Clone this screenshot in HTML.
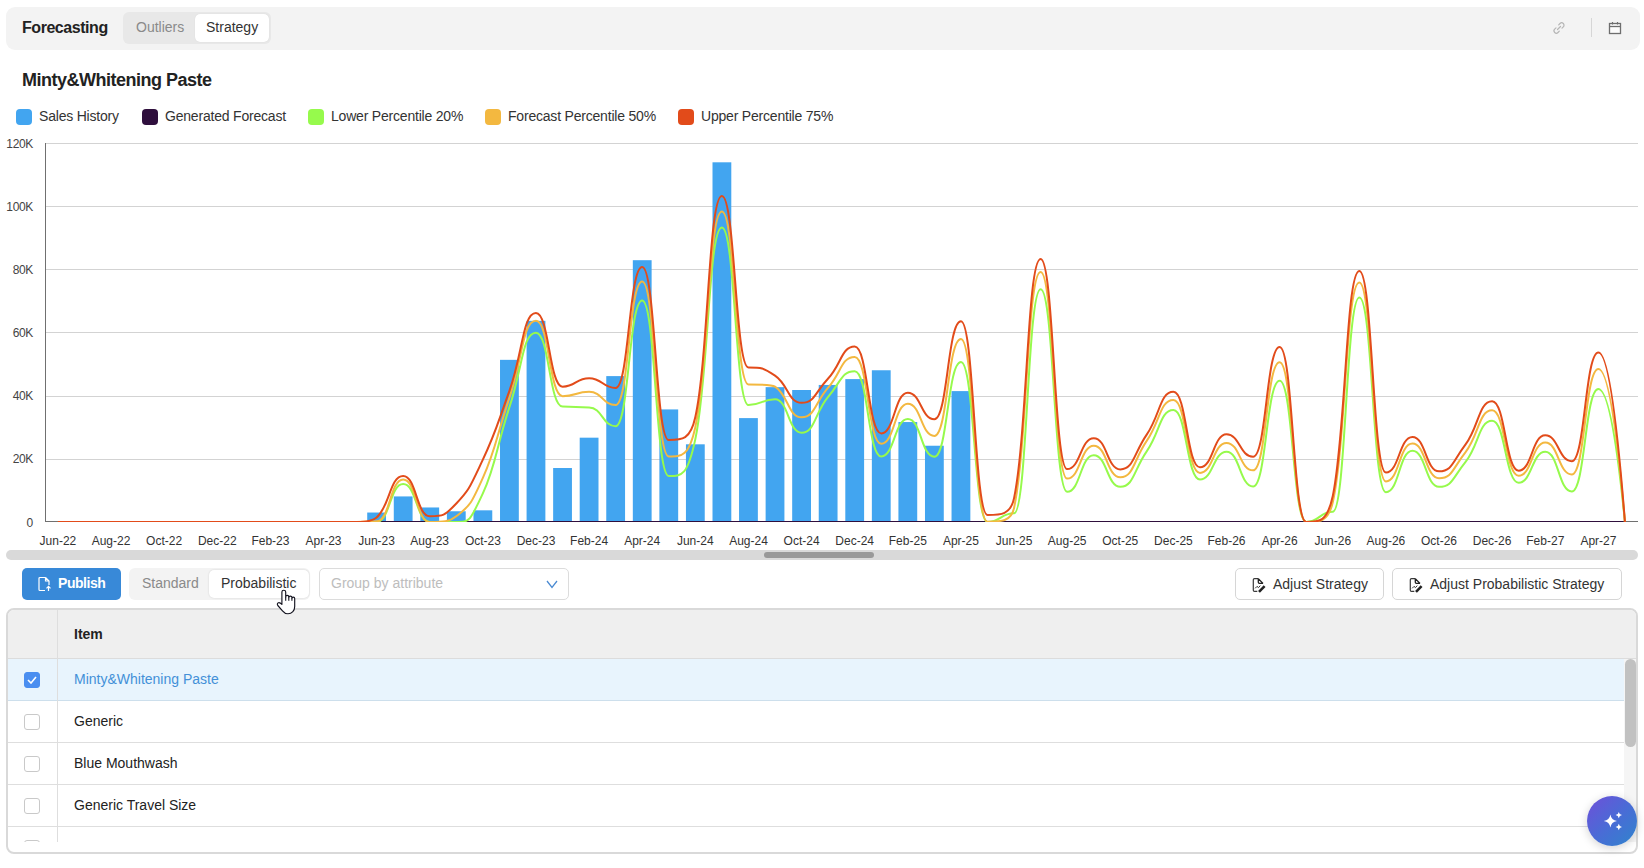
<!DOCTYPE html>
<html><head><meta charset="utf-8"><title>Forecasting</title>
<style>
*{box-sizing:border-box;margin:0;padding:0}
html,body{width:1644px;height:868px;overflow:hidden;background:#fff;font-family:"Liberation Sans",sans-serif;color:#222}
.abs{position:absolute}
.hdr{position:absolute;left:6px;top:7px;width:1634px;height:43px;background:#f3f3f3;border-radius:9px}
.hdr .title{position:absolute;left:16px;top:12px;font-size:16px;font-weight:bold;color:#222;letter-spacing:-0.45px}
.seg{position:absolute;background:#e8e8e8;border-radius:6px}
.seg .opt{position:absolute;font-size:14px;color:#8a8a8a}
.seg .sel{position:absolute;background:#fff;border-radius:5px;box-shadow:0 0 1px rgba(0,0,0,.12)}
.chart{position:absolute;left:0;top:0}
.chart text{font-family:"Liberation Sans",sans-serif}
.yl{font-size:12px;fill:#444;letter-spacing:-0.4px}
.xl{font-size:12px;fill:#333}
.ctitle{position:absolute;left:22px;top:70px;font-size:18px;font-weight:bold;color:#222;letter-spacing:-0.5px}
.lg{position:absolute;top:109px;height:16px}
.lg i{position:absolute;left:0;top:0;width:16px;height:16px;border-radius:4px}
.lg span{position:absolute;left:23px;top:-1px;letter-spacing:-0.2px;font-size:14px;color:#333;white-space:nowrap;line-height:16px}
.sb{position:absolute;left:6px;top:550px;width:1632px;height:10px;background:#d9d9d9;border-radius:5px}
.sb b{position:absolute;left:758px;top:2px;width:110px;height:6px;background:#999;border-radius:3px}
.btn{position:absolute;height:32px;border-radius:5px;font-size:14px}
.pub{left:22px;top:568px;width:99px;background:#3889D8;color:#fff}
.ob{top:568px;background:#fff;border:1px solid #d6d6d6;color:#333}
.dd{position:absolute;left:319px;top:568px;width:250px;height:32px;border:1px solid #dcdcdc;border-radius:5px;background:#fff}
.dd span{position:absolute;left:11px;top:6px;font-size:14px;color:#bdbdbd}
.tbl{position:absolute;left:6px;top:608px;width:1632px;height:246px;border:2px solid #d9d9d9;border-radius:8px;overflow:hidden;background:#fff}
.th{position:absolute;left:0;top:0;width:100%;height:49px;background:#efefef;border-bottom:1px solid #dcdcdc}
.row{position:absolute;left:0;width:1617px;height:42px;border-bottom:1px solid #dedede}
.row span{position:absolute;left:66px;top:12px;font-size:14px;color:#222}
.cb{position:absolute;left:16px;top:13px;width:16px;height:16px;border:1px solid #c9c9c9;border-radius:3px;background:#fff}
.vdiv{position:absolute;left:49px;top:0;width:1px;height:232px;background:#dedede}
.fab{position:absolute;left:1587px;top:796px;width:50px;height:50px;border-radius:50%;background:linear-gradient(135deg,#6f4fd9 0%,#4a6bd6 50%,#2f85cc 100%);box-shadow:0 2px 10px rgba(0,0,0,.18)}
</style></head>
<body>
<div class="hdr">
  <div class="title">Forecasting</div>
  <div class="seg" style="left:117px;top:5px;width:148px;height:32px">
    <div class="opt" style="left:13px;top:7px">Outliers</div>
    <div class="sel" style="left:72px;top:2px;width:74px;height:28px"></div>
    <div class="opt" style="left:83px;top:7px;color:#333">Strategy</div>
  </div>
  <svg class="abs" style="left:1544px;top:12px" width="18" height="18" viewBox="0 0 18 18"><path d="M7.5 10.5l3-3M8.7 5.8l1.3-1.3a2.3 2.3 0 0 1 3.3 3.3l-1.3 1.3M9.3 12.2l-1.3 1.3a2.3 2.3 0 0 1-3.3-3.3l1.3-1.3" fill="none" stroke="#b5b5b5" stroke-width="1.2" stroke-linecap="round"/></svg>
  <div class="abs" style="left:1585px;top:11px;width:1px;height:19px;background:#d6d6d6"></div>
  <svg class="abs" style="left:1601px;top:13px" width="16" height="16" viewBox="0 0 16 16"><rect x="2.5" y="3.5" width="11" height="10" fill="#fcfcfc" stroke="#6e6e6e" stroke-width="1.3"/><line x1="2.5" y1="6.5" x2="13.5" y2="6.5" stroke="#6e6e6e" stroke-width="1.3"/><line x1="5.5" y1="2" x2="5.5" y2="4.5" stroke="#6e6e6e" stroke-width="1.2"/><line x1="10.5" y1="2" x2="10.5" y2="4.5" stroke="#6e6e6e" stroke-width="1.2"/></svg>
</div>
<div class="ctitle">Minty&amp;Whitening Paste</div>
<div class="lg" style="left:16px"><i style="background:#42A5F0"></i><span>Sales History</span></div>
<div class="lg" style="left:142px"><i style="background:#2F0F3D"></i><span>Generated Forecast</span></div>
<div class="lg" style="left:308px"><i style="background:#96FA4C"></i><span>Lower Percentile 20%</span></div>
<div class="lg" style="left:485px"><i style="background:#F3B840"></i><span>Forecast Percentile 50%</span></div>
<div class="lg" style="left:678px"><i style="background:#E24B1A"></i><span>Upper Percentile 75%</span></div>
<svg class="chart" width="1644" height="570" viewBox="0 0 1644 570">
<line x1="45" y1="459.5" x2="1638" y2="459.5" stroke="#D3D3D3" stroke-width="1"/>
<line x1="45" y1="396.5" x2="1638" y2="396.5" stroke="#D3D3D3" stroke-width="1"/>
<line x1="45" y1="332.5" x2="1638" y2="332.5" stroke="#D3D3D3" stroke-width="1"/>
<line x1="45" y1="269.5" x2="1638" y2="269.5" stroke="#D3D3D3" stroke-width="1"/>
<line x1="45" y1="206.5" x2="1638" y2="206.5" stroke="#D3D3D3" stroke-width="1"/>
<line x1="45" y1="143.5" x2="1638" y2="143.5" stroke="#D3D3D3" stroke-width="1"/>
<text x="32.8" y="526.6" text-anchor="end" class="yl">0</text>
<text x="32.8" y="463.4" text-anchor="end" class="yl">20K</text>
<text x="32.8" y="400.3" text-anchor="end" class="yl">40K</text>
<text x="32.8" y="337.1" text-anchor="end" class="yl">60K</text>
<text x="32.8" y="274.0" text-anchor="end" class="yl">80K</text>
<text x="32.8" y="210.8" text-anchor="end" class="yl">100K</text>
<text x="32.8" y="147.6" text-anchor="end" class="yl">120K</text>
<rect x="367.22" y="512.53" width="18.80" height="9.47" fill="#42A5F0"/>
<rect x="393.78" y="496.42" width="18.80" height="25.58" fill="#42A5F0"/>
<rect x="420.34" y="507.47" width="18.80" height="14.53" fill="#42A5F0"/>
<rect x="446.90" y="511.26" width="18.80" height="10.74" fill="#42A5F0"/>
<rect x="473.46" y="510.32" width="18.80" height="11.68" fill="#42A5F0"/>
<rect x="500.02" y="359.84" width="18.80" height="162.16" fill="#42A5F0"/>
<rect x="526.58" y="320.84" width="18.80" height="201.16" fill="#42A5F0"/>
<rect x="553.14" y="468.00" width="18.80" height="54.00" fill="#42A5F0"/>
<rect x="579.70" y="437.68" width="18.80" height="84.32" fill="#42A5F0"/>
<rect x="606.26" y="376.10" width="18.80" height="145.90" fill="#42A5F0"/>
<rect x="632.82" y="260.20" width="18.80" height="261.80" fill="#42A5F0"/>
<rect x="659.38" y="409.42" width="18.80" height="112.58" fill="#42A5F0"/>
<rect x="685.94" y="444.31" width="18.80" height="77.69" fill="#42A5F0"/>
<rect x="712.50" y="162.30" width="18.80" height="359.70" fill="#42A5F0"/>
<rect x="739.06" y="418.10" width="18.80" height="103.90" fill="#42A5F0"/>
<rect x="765.62" y="387.15" width="18.80" height="134.85" fill="#42A5F0"/>
<rect x="792.18" y="390.00" width="18.80" height="132.00" fill="#42A5F0"/>
<rect x="818.74" y="384.94" width="18.80" height="137.06" fill="#42A5F0"/>
<rect x="845.30" y="379.10" width="18.80" height="142.90" fill="#42A5F0"/>
<rect x="871.86" y="370.26" width="18.80" height="151.74" fill="#42A5F0"/>
<rect x="898.42" y="422.05" width="18.80" height="99.95" fill="#42A5F0"/>
<rect x="924.98" y="445.73" width="18.80" height="76.27" fill="#42A5F0"/>
<rect x="951.54" y="391.10" width="18.80" height="130.90" fill="#42A5F0"/>
<line x1="45.5" y1="143" x2="45.5" y2="522" stroke="#707070" stroke-width="1"/>
<line x1="45" y1="521.5" x2="1638" y2="521.5" stroke="#707070" stroke-width="1"/>
<defs><clipPath id="gc"><rect x="40" y="100" width="1604" height="422"/></clipPath></defs><g clip-path="url(#gc)">
<line x1="57.9" y1="522.0" x2="1624.9" y2="522.0" stroke="#2F0F3D" stroke-width="2"/>
<path d="M57.90 522.00C71.18 522.00 71.18 522.00 84.46 522.00C97.74 522.00 97.74 522.00 111.02 522.00C124.30 522.00 124.30 522.00 137.58 522.00C150.86 522.00 150.86 522.00 164.14 522.00C177.42 522.00 177.42 522.00 190.70 522.00C203.98 522.00 203.98 522.00 217.26 522.00C230.54 522.00 230.54 522.00 243.82 522.00C257.10 522.00 257.10 522.00 270.38 522.00C283.66 522.00 283.66 522.00 296.94 522.00C310.22 522.00 310.22 522.00 323.50 522.00C336.78 522.00 336.78 522.00 350.06 522.00C363.34 522.00 363.34 522.00 376.62 522.00C389.90 522.00 389.90 483.95 403.18 483.95C416.46 483.95 416.46 522.00 429.74 522.00C443.02 522.00 443.02 522.00 456.30 522.00C469.58 522.00 469.63 522.00 482.86 493.42C496.14 464.72 496.14 447.39 509.42 407.21C522.70 367.02 522.70 332.68 535.98 332.68C549.26 332.68 549.26 406.58 562.54 406.58C575.82 406.58 575.82 407.52 589.10 407.52C602.38 407.52 602.38 426.15 615.66 426.15C628.94 426.15 628.94 300.47 642.22 300.47C655.50 300.47 655.50 476.05 668.78 476.05C682.06 476.05 687.44 476.05 695.34 439.10C708.62 376.97 708.62 227.52 721.90 227.52C735.18 227.52 735.18 405.00 748.46 405.00C761.74 405.00 761.74 399.31 775.02 399.31C788.30 399.31 788.30 432.79 801.58 432.79C814.86 432.79 814.86 412.18 828.14 396.79C841.42 381.39 841.42 371.21 854.70 371.21C867.98 371.21 867.98 456.47 881.26 456.47C894.54 456.47 894.54 418.89 907.82 418.89C921.10 418.89 921.10 456.79 934.38 456.79C947.66 456.79 947.66 362.05 960.94 362.05C974.22 362.05 974.22 522.00 987.50 522.00C1000.78 522.00 1000.78 513.32 1014.06 513.32C1027.34 513.32 1027.34 289.26 1040.62 289.26C1053.90 289.26 1053.90 491.84 1067.18 491.84C1080.46 491.84 1080.46 455.21 1093.74 455.21C1107.02 455.21 1107.02 486.79 1120.30 486.79C1133.58 486.79 1133.58 470.29 1146.86 451.10C1160.14 431.92 1160.14 410.05 1173.42 410.05C1186.70 410.05 1186.70 479.52 1199.98 479.52C1213.26 479.52 1213.26 451.73 1226.54 451.73C1239.82 451.73 1239.82 486.47 1253.10 486.47C1266.38 486.47 1266.38 380.68 1279.66 380.68C1292.94 380.68 1292.94 522.00 1306.22 522.00C1319.50 522.00 1319.50 511.74 1332.78 511.74C1346.06 511.74 1346.06 297.62 1359.34 297.62C1372.62 297.62 1372.62 492.16 1385.90 492.16C1399.18 492.16 1399.18 450.79 1412.46 450.79C1425.74 450.79 1425.74 486.79 1439.02 486.79C1452.30 486.79 1452.30 478.34 1465.58 461.84C1478.86 445.34 1478.86 420.79 1492.14 420.79C1505.42 420.79 1505.42 482.68 1518.70 482.68C1531.98 482.68 1531.98 451.73 1545.26 451.73C1558.54 451.73 1558.54 491.53 1571.82 491.53C1585.10 491.53 1585.10 388.89 1598.38 388.89C1607.23 388.89 1616.09 433.26 1624.94 522.00" fill="none" stroke="#96FA4C" stroke-width="2"/>
<path d="M57.90 522.00C71.18 522.00 71.18 522.00 84.46 522.00C97.74 522.00 97.74 522.00 111.02 522.00C124.30 522.00 124.30 522.00 137.58 522.00C150.86 522.00 150.86 522.00 164.14 522.00C177.42 522.00 177.42 522.00 190.70 522.00C203.98 522.00 203.98 522.00 217.26 522.00C230.54 522.00 230.54 522.00 243.82 522.00C257.10 522.00 257.10 522.00 270.38 522.00C283.66 522.00 283.66 522.00 296.94 522.00C310.22 522.00 310.22 522.00 323.50 522.00C336.78 522.00 336.78 522.00 350.06 522.00C363.34 522.00 363.34 521.37 376.62 521.37C389.90 521.37 389.90 479.52 403.18 479.52C416.46 479.52 416.46 522.00 429.74 522.00C443.02 522.00 449.45 522.00 456.30 516.32C469.58 505.30 469.58 507.59 482.86 477.95C496.14 448.30 496.14 437.01 509.42 397.73C522.70 358.46 522.70 320.84 535.98 320.84C549.26 320.84 549.26 396.15 562.54 396.15C575.82 396.15 575.82 391.73 589.10 391.73C602.38 391.73 602.38 405.00 615.66 405.00C628.94 405.00 628.94 281.52 642.22 281.52C655.50 281.52 655.50 456.47 668.78 456.47C682.06 456.47 688.97 456.47 695.34 427.10C708.62 365.84 708.62 211.41 721.90 211.41C735.18 211.41 735.18 384.47 748.46 384.47C761.74 384.47 771.44 384.47 775.02 386.68C788.30 394.89 788.30 417.31 801.58 417.31C814.86 417.31 814.86 402.71 828.14 387.63C841.42 372.55 841.42 356.99 854.70 356.99C867.98 356.99 867.98 443.84 881.26 443.84C894.54 443.84 894.54 403.73 907.82 403.73C921.10 403.73 921.10 435.94 934.38 435.94C947.66 435.94 947.66 338.99 960.94 338.99C974.22 338.99 974.22 521.68 987.50 521.68C1000.78 521.68 1011.14 521.68 1014.06 507.95C1027.34 445.50 1027.34 271.89 1040.62 271.89C1053.90 271.89 1053.90 478.58 1067.18 478.58C1080.46 478.58 1080.46 445.73 1093.74 445.73C1107.02 445.73 1107.02 477.31 1120.30 477.31C1133.58 477.31 1133.58 460.02 1146.86 440.68C1160.14 421.34 1160.14 399.94 1173.42 399.94C1186.70 399.94 1186.70 472.89 1199.98 472.89C1213.26 472.89 1213.26 442.89 1226.54 442.89C1239.82 442.89 1239.82 470.37 1253.10 470.37C1266.38 470.37 1266.38 362.36 1279.66 362.36C1292.94 362.36 1292.94 522.00 1306.22 522.00C1319.50 522.00 1328.40 522.00 1332.78 502.26C1346.06 442.38 1346.06 282.47 1359.34 282.47C1372.62 282.47 1372.62 481.42 1385.90 481.42C1399.18 481.42 1399.18 443.52 1412.46 443.52C1425.74 443.52 1425.74 478.26 1439.02 478.26C1452.30 478.26 1452.30 469.02 1465.58 452.05C1478.86 435.08 1478.86 410.36 1492.14 410.36C1505.42 410.36 1505.42 475.74 1518.70 475.74C1531.98 475.74 1531.98 442.58 1545.26 442.58C1558.54 442.58 1558.54 474.47 1571.82 474.47C1585.10 474.47 1585.10 368.99 1598.38 368.99C1607.23 368.99 1616.09 420.00 1624.94 522.00" fill="none" stroke="#F3B840" stroke-width="2"/>
<path d="M57.90 522.00C71.18 522.00 71.18 522.00 84.46 522.00C97.74 522.00 97.74 522.00 111.02 522.00C124.30 522.00 124.30 522.00 137.58 522.00C150.86 522.00 150.86 522.00 164.14 522.00C177.42 522.00 177.42 522.00 190.70 522.00C203.98 522.00 203.98 522.00 217.26 522.00C230.54 522.00 230.54 522.00 243.82 522.00C257.10 522.00 257.10 522.00 270.38 522.00C283.66 522.00 283.66 522.00 296.94 522.00C310.22 522.00 310.22 522.00 323.50 522.00C336.78 522.00 336.78 522.00 350.06 522.00C363.34 522.00 371.51 522.00 376.62 517.58C389.90 506.09 389.90 476.05 403.18 476.05C416.46 476.05 416.46 516.16 429.74 516.16C443.02 516.16 444.43 516.16 456.30 503.53C469.58 489.39 469.58 487.81 482.86 459.63C496.14 431.44 496.14 427.46 509.42 390.79C522.70 354.11 522.70 312.94 535.98 312.94C549.26 312.94 549.26 386.68 562.54 386.68C575.82 386.68 575.82 378.15 589.10 378.15C602.38 378.15 602.38 387.94 615.66 387.94C628.94 387.94 628.94 266.99 642.22 266.99C655.50 266.99 655.50 440.05 668.78 440.05C682.06 440.05 690.32 440.05 695.34 417.00C708.62 355.97 708.62 195.94 721.90 195.94C735.18 195.94 735.18 367.42 748.46 367.42C761.74 367.42 762.69 367.42 775.02 375.63C788.30 384.47 788.30 402.79 801.58 402.79C814.86 402.79 814.86 392.52 828.14 378.47C841.42 364.42 841.42 346.57 854.70 346.57C867.98 346.57 867.98 433.42 881.26 433.42C894.54 433.42 894.54 392.68 907.82 392.68C921.10 392.68 921.10 419.21 934.38 419.21C947.66 419.21 947.66 321.31 960.94 321.31C974.22 321.31 974.22 514.89 987.50 514.89C1000.78 514.89 1010.58 514.89 1014.06 498.16C1027.34 434.21 1027.34 259.10 1040.62 259.10C1053.90 259.10 1053.90 469.10 1067.18 469.10C1080.46 469.10 1080.46 438.16 1093.74 438.16C1107.02 438.16 1107.02 469.42 1120.30 469.42C1133.58 469.42 1133.58 453.79 1146.86 434.37C1160.14 414.94 1160.14 391.73 1173.42 391.73C1186.70 391.73 1186.70 467.21 1199.98 467.21C1213.26 467.21 1213.26 434.37 1226.54 434.37C1239.82 434.37 1239.82 456.79 1253.10 456.79C1266.38 456.79 1266.38 346.89 1279.66 346.89C1292.94 346.89 1292.94 522.00 1306.22 522.00C1319.50 522.00 1327.26 522.00 1332.78 495.95C1346.06 433.22 1346.06 271.10 1359.34 271.10C1372.62 271.10 1372.62 472.58 1385.90 472.58C1399.18 472.58 1399.18 436.89 1412.46 436.89C1425.74 436.89 1425.74 471.31 1439.02 471.31C1452.30 471.31 1452.30 462.00 1465.58 444.47C1478.86 426.94 1478.86 401.21 1492.14 401.21C1505.42 401.21 1505.42 470.68 1518.70 470.68C1531.98 470.68 1531.98 435.31 1545.26 435.31C1558.54 435.31 1558.54 461.21 1571.82 461.21C1585.10 461.21 1585.10 352.57 1598.38 352.57C1607.23 352.57 1616.09 409.05 1624.94 522.00" fill="none" stroke="#E24B1A" stroke-width="2"/>
</g>
<text x="57.9" y="545" text-anchor="middle" class="xl">Jun-22</text>
<text x="111.0" y="545" text-anchor="middle" class="xl">Aug-22</text>
<text x="164.1" y="545" text-anchor="middle" class="xl">Oct-22</text>
<text x="217.3" y="545" text-anchor="middle" class="xl">Dec-22</text>
<text x="270.4" y="545" text-anchor="middle" class="xl">Feb-23</text>
<text x="323.5" y="545" text-anchor="middle" class="xl">Apr-23</text>
<text x="376.6" y="545" text-anchor="middle" class="xl">Jun-23</text>
<text x="429.7" y="545" text-anchor="middle" class="xl">Aug-23</text>
<text x="482.9" y="545" text-anchor="middle" class="xl">Oct-23</text>
<text x="536.0" y="545" text-anchor="middle" class="xl">Dec-23</text>
<text x="589.1" y="545" text-anchor="middle" class="xl">Feb-24</text>
<text x="642.2" y="545" text-anchor="middle" class="xl">Apr-24</text>
<text x="695.3" y="545" text-anchor="middle" class="xl">Jun-24</text>
<text x="748.5" y="545" text-anchor="middle" class="xl">Aug-24</text>
<text x="801.6" y="545" text-anchor="middle" class="xl">Oct-24</text>
<text x="854.7" y="545" text-anchor="middle" class="xl">Dec-24</text>
<text x="907.8" y="545" text-anchor="middle" class="xl">Feb-25</text>
<text x="960.9" y="545" text-anchor="middle" class="xl">Apr-25</text>
<text x="1014.1" y="545" text-anchor="middle" class="xl">Jun-25</text>
<text x="1067.2" y="545" text-anchor="middle" class="xl">Aug-25</text>
<text x="1120.3" y="545" text-anchor="middle" class="xl">Oct-25</text>
<text x="1173.4" y="545" text-anchor="middle" class="xl">Dec-25</text>
<text x="1226.5" y="545" text-anchor="middle" class="xl">Feb-26</text>
<text x="1279.7" y="545" text-anchor="middle" class="xl">Apr-26</text>
<text x="1332.8" y="545" text-anchor="middle" class="xl">Jun-26</text>
<text x="1385.9" y="545" text-anchor="middle" class="xl">Aug-26</text>
<text x="1439.0" y="545" text-anchor="middle" class="xl">Oct-26</text>
<text x="1492.1" y="545" text-anchor="middle" class="xl">Dec-26</text>
<text x="1545.3" y="545" text-anchor="middle" class="xl">Feb-27</text>
<text x="1598.4" y="545" text-anchor="middle" class="xl">Apr-27</text>
</svg>
<div class="sb"><b></b></div>
<div class="btn pub"><svg class="abs" style="left:15px;top:8px" width="15" height="16" viewBox="0 0 15 16"><path d="M8.5 1.5H3a1 1 0 0 0-1 1v11a1 1 0 0 0 1 1h5M8.5 1.5l3.5 3.5v4M8.5 1.5V5h3.5" fill="none" stroke="#fff" stroke-width="1.2"/><path d="M11.5 15v-4.5M9.5 12.3l2-2 2 2" fill="none" stroke="#fff" stroke-width="1.2"/></svg><span class="abs" style="left:36px;top:7px;font-weight:bold;color:#fff;letter-spacing:-0.45px">Publish</span></div>
<div class="seg" style="left:129px;top:568px;width:181px;height:32px;background:#f3f3f3">
  <div class="opt" style="left:13px;top:7px">Standard</div>
  <div class="sel" style="left:80px;top:2px;width:100px;height:28px;box-shadow:0 0 2px rgba(0,0,0,.15)"></div>
  <div class="opt" style="left:92px;top:7px;color:#333">Probabilistic</div>
</div>
<div class="dd"><span>Group by attribute</span><svg class="abs" style="left:226px;top:10px" width="12" height="10" viewBox="0 0 12 10"><path d="M1 2l5 6.5 5-6.5" fill="none" stroke="#4a8ad2" stroke-width="1.25"/></svg></div>
<div class="btn ob" style="left:1235px;width:149px"><svg class="abs" style="left:15px;top:8px" width="16" height="16" viewBox="0 0 16 16"><path d="M7.3 1.6H3.5Q2.3 1.6 2.3 2.8V13.2Q2.3 14.4 3.5 14.4H6.3" fill="none" stroke="#3a3a3a" stroke-width="1.2"/><path d="M7.3 1.6L12 6.5M7.3 1.6V5.2Q7.3 6.3 8.4 6.3H12" fill="none" stroke="#222" stroke-width="1.3"/><path d="M4.2 11.3L6 9.4 7.5 10.6 9.3 8.6" fill="none" stroke="#333" stroke-width="1"/><path d="M13.6 9.2L8 14.8" stroke="#222" stroke-width="2.6"/></svg><span class="abs" style="left:37px;top:7px">Adjust Strategy</span></div>
<div class="btn ob" style="left:1392px;width:230px"><svg class="abs" style="left:15px;top:8px" width="16" height="16" viewBox="0 0 16 16"><path d="M7.3 1.6H3.5Q2.3 1.6 2.3 2.8V13.2Q2.3 14.4 3.5 14.4H6.3" fill="none" stroke="#3a3a3a" stroke-width="1.2"/><path d="M7.3 1.6L12 6.5M7.3 1.6V5.2Q7.3 6.3 8.4 6.3H12" fill="none" stroke="#222" stroke-width="1.3"/><path d="M4.2 11.3L6 9.4 7.5 10.6 9.3 8.6" fill="none" stroke="#333" stroke-width="1"/><path d="M13.6 9.2L8 14.8" stroke="#222" stroke-width="2.6"/></svg><span class="abs" style="left:37px;top:7px">Adjust Probabilistic Strategy</span></div>
<div class="tbl">
  <div class="th"><span class="abs" style="left:66px;top:16px;font-size:14px;font-weight:bold;color:#222">Item</span></div>
  <div class="row" style="top:49px;background:#e8f4fd;border-bottom-color:#cddfec"><div class="cb" style="background:#4A8EF0;border-color:#4A8EF0"><svg class="abs" style="left:2px;top:3px" width="10" height="8" viewBox="0 0 10 8"><path d="M1 4l3 3 5-6" fill="none" stroke="#fff" stroke-width="1.6"/></svg></div><span style="color:#4390d8">Minty&amp;Whitening Paste</span></div>
  <div class="row" style="top:91px"><div class="cb"></div><span>Generic</span></div>
  <div class="row" style="top:133px"><div class="cb"></div><span>Blue Mouthwash</span></div>
  <div class="row" style="top:175px"><div class="cb"></div><span>Generic Travel Size</span></div>
  <div class="row" style="top:217px;height:15px;overflow:hidden;border-bottom:none"><div class="cb"></div></div>
  <div class="vdiv"></div>
  <div class="abs" style="left:1616px;top:49px;width:13px;height:183px;background:#f5f5f5"></div>
  <div class="abs" style="left:1617px;top:49px;width:11px;height:88px;background:#c1c1c1;border-radius:6px"></div>
</div>
<div class="fab"><svg class="abs" style="left:0;top:0" width="50" height="50" viewBox="0 0 50 50"><path d="M23.4 18.4Q24.3 24.1 30.0 25.0Q24.3 25.9 23.4 31.6Q22.5 25.9 16.8 25.0Q22.5 24.1 23.4 18.4ZM31.8 15.9Q32.2 18.7 35.0 19.1Q32.2 19.5 31.8 22.3Q31.4 19.5 28.6 19.1Q31.4 18.7 31.8 15.9ZM31.8 27.8Q32.2 30.6 35.0 31.0Q32.2 31.4 31.8 34.2Q31.4 31.4 28.6 31.0Q31.4 30.6 31.8 27.8Z" fill="#fff"/></svg></div>
<svg class="abs" style="left:276px;top:589px" width="22" height="27" viewBox="0 0 22 27"><path d="M5.9 15.4V3.1A1.9 1.9 0 0 1 9.7 3.1V7.9A1.55 1.55 0 0 1 12.8 7.9V8.6A1.55 1.55 0 0 1 15.9 8.6V9.5A1.4 1.4 0 0 1 18.7 9.5V17.5C18.7 21.5 16 24.7 12 24.7C9.5 24.7 7.8 23.5 6.5 21.8L1.8 16.5C1 15.5 1.3 14 2.5 13.7C3.6 13.4 4.6 14 5.9 15.4Z" fill="#fff" stroke="#141420" stroke-width="1.15" stroke-linejoin="round"/><path d="M9.7 7.9V11.7M12.8 8.6V11.7M15.9 9.5V11.7" stroke="#141420" stroke-width="1.1"/></svg>
</body></html>
